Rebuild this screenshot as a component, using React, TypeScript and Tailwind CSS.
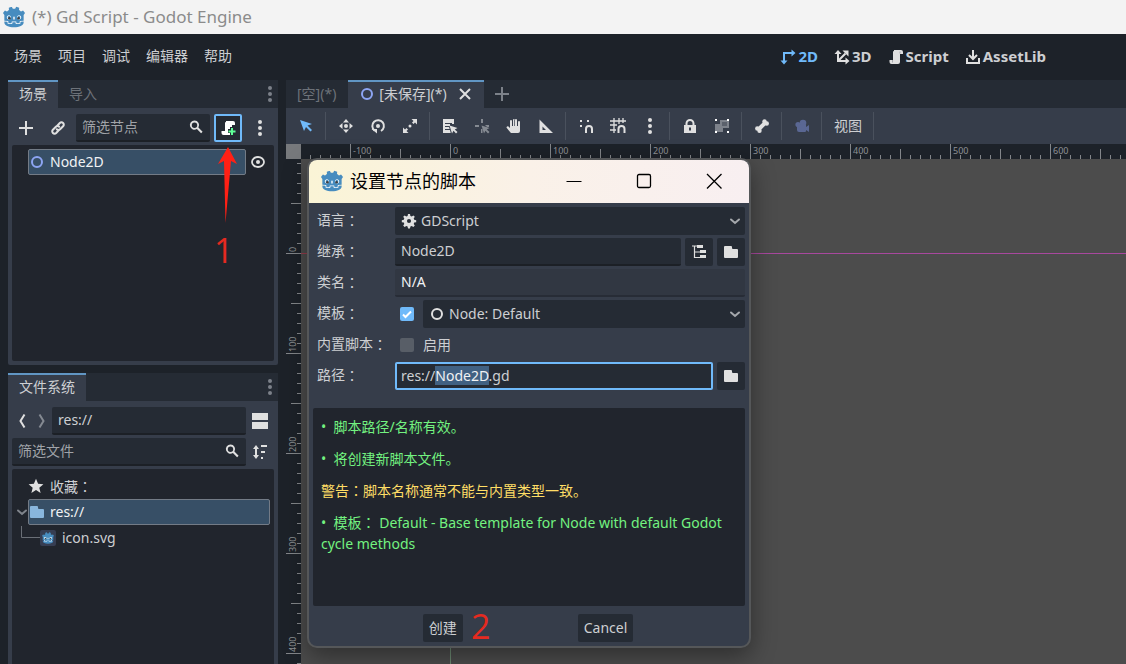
import { useEffect, useRef } from "react";
import type { ReactNode } from "react";
import { SiGodotengine } from "react-icons/si";

const Icon = ({ children, className = "size-4 text-[#e0e0e0]" }: { children: ReactNode; className?: string }) => (
  <svg viewBox="0 0 16 16" className={`shrink-0 ${className}`} fill="currentColor" aria-hidden="true">
    {children}
  </svg>
);

const GodotLogo = ({ className }: { className: string }) => (
  <svg viewBox="0 0 24 24" className={`shrink-0 ${className}`} aria-hidden="true">
    <path d="M4 9h16v11H4z" fill="#fff" />
    <SiGodotengine size={24} color="#478cbf" />
    <circle cx="7" cy="13.4" r="1.4" fill="#414042" />
    <circle cx="17" cy="13.4" r="1.4" fill="#414042" />
  </svg>
);

const Dots = ({ className }: { className?: string }) => (
  <Icon className={className}>
    <circle cx="8" cy="2" r="2" />
    <circle cx="8" cy="8" r="2" />
    <circle cx="8" cy="14" r="2" />
  </Icon>
);

const SearchIcon = () => (
  <Icon>
    <path d="M6.5 1.5a4.6 4.6 0 1 0 2.4 8.5l4.2 4.2 1.5-1.5-4.2-4.1A4.6 4.6 0 0 0 6.5 1.5zm0 2a2.7 2.7 0 1 1 0 5.400a2.7 2.7 0 0 1 0-5.400z" fillRule="evenodd" />
  </Icon>
);

const scriptPath =
  "M6 1v1a1 1 0 0 0-1 1v8H1.500v2a2 2 0 0 0 2 2H10a2 2 0 0 0 2-2V5h3V3a2 2 0 0 0-2-2z";

const ScriptIcon = () => (
  <Icon>
    <path d={scriptPath} />
    <path d="M4.500 11v2.500M12 2.500v2" stroke="#9a9da2" strokeWidth=".8" />
  </Icon>
);

const FolderIcon = ({ className }: { className?: string }) => (
  <Icon className={className}>
    <path d="M2 2a1 1 0 0 0-1 1v10a1 1 0 0 0 1 1h12a1 1 0 0 0 1-1V6a1 1 0 0 0-1-1h-4a1 1 0 0 1-1-1V3a1 1 0 0 0-1-1z" />
  </Icon>
);

const Chevron = ({ className }: { className: string }) => (
  <Icon className={className}>
    <path d="m4 6.500 4 3.500 4-3.500" fill="none" stroke="currentColor" strokeWidth="2" strokeLinecap="round" />
  </Icon>
);

const NodeRing = ({ className }: { className: string }) => (
  <Icon className={className}>
    <circle cx="8" cy="8" r="5" fill="none" stroke="currentColor" strokeWidth="2" />
  </Icon>
);

const Colon = () => <span className="font-['Noto_Sans_CJK_JP',sans-serif]">：</span>;

const IconButton = ({ label, children, className = "w-7" }: { label: string; children: ReactNode; className?: string }) => (
  <button type="button" aria-label={label} className={`flex h-7 shrink-0 items-center justify-center ${className}`}>
    {children}
  </button>
);

const Separator = () => (
  <div className="flex h-7 w-1 shrink-0 pl-px">
    <div className="w-px bg-[#4a515d]" />
  </div>
);

const fieldClass =
  "block h-7 w-full min-w-0 rounded-xs border-b-2 border-[#1c2026] bg-[#252b34] px-1.5 pb-0.5 text-sm text-[#cdcfd2] outline-none placeholder:text-[#a0a3a8]";

const MenuBar = () => (
  <header className="flex h-[46px] shrink-0 items-center pl-1.5 pr-[72px] text-sm">
    <nav className="flex pb-0.5">
      {["场景", "项目", "调试", "编辑器", "帮助"].map((name) => (
        <button key={name} type="button" className="px-2">
          {name}
        </button>
      ))}
    </nav>
    <div className="ml-auto flex text-[15px] font-bold text-[#cdcfd2]">
      <button type="button" className="flex items-center gap-0.5 px-2 text-[#70bafa]">
        <Icon className="size-4 text-[#70bafa]">
          <path d="M4 12V4h8" fill="none" stroke="currentColor" strokeWidth="2" />
          <path d="M11.500 0.500 15.500 4l-4 3.500zM0.500 11.500 4 15.500l3.500-4z" />
        </Icon>
        2D
      </button>
      <button type="button" className="flex items-center gap-0.5 px-2">
        <Icon>
          <path d="M4 3v9h9M4 12l7.500-7.500" fill="none" stroke="currentColor" strokeWidth="2" />
          <path d="M.5 5 4 1l3.500 4zM11.500 8.500l4 3.500-4 3.500zM8.500 1.500h6v6z" />
        </Icon>
        3D
      </button>
      <button type="button" className="flex items-center gap-0.5 px-2">
        <ScriptIcon />
        Script
      </button>
      <button type="button" className="flex items-center gap-0.5 px-2">
        <Icon>
          <path d="M2 9v5h12V9M8 1v8M4 6l4 4 4-4" fill="none" stroke="currentColor" strokeWidth="2" />
        </Icon>
        AssetLib
      </button>
    </div>
  </header>
);

const DockTabs = ({ tabs }: { tabs: string[] }) => (
  <div className="flex h-7 shrink-0 bg-[#252b34] text-sm">
    {tabs.map((tab, i) =>
      i === 0 ? (
        <button key={tab} type="button" className="border-t-2 border-[#6196c4] bg-[#363d4a] px-[11px] pb-0.5">
          {tab}
        </button>
      ) : (
        <button key={tab} type="button" className="px-[11px] text-[#6d7279]">
          {tab}
        </button>
      ),
    )}
    <button type="button" aria-label="停靠选项" className="ml-auto flex w-4 items-center justify-center">
      <Dots className="size-4 text-[#7c8189]" />
    </button>
  </div>
);

const SceneDock = () => (
  <section className="flex min-h-0 flex-[285_1_0%] flex-col rounded-xs bg-[#363d4a]">
    <DockTabs tabs={["场景", "导入"]} />
    <div className="flex min-h-0 flex-1 flex-col gap-[3px] px-1 pb-1 pt-1.5">
      <div className="flex gap-1">
        <IconButton label="添加节点">
          <Icon>
            <path d="M8 1v14M1 8h14" stroke="currentColor" strokeWidth="2" />
          </Icon>
        </IconButton>
        <IconButton label="实例化场景">
          <Icon>
            <g fill="none" stroke="currentColor" strokeWidth="2" strokeLinecap="round">
              <path d="m7.500 5.500 2.300-2.500a2.300 2.300 0 0 1 3.300 3.300l-3 3a2.300 2.300 0 0 1-3.300 0" />
              <path d="m8.500 10.500-2.300 2.500a2.300 2.300 0 0 1-3.300-3.300l3-3a2.300 2.300 0 0 1 3.300 0" />
            </g>
          </Icon>
        </IconButton>
        <div className="relative min-w-0 flex-1">
          <input aria-label="筛选节点" placeholder="筛选节点" className={fieldClass} />
          <div className="pointer-events-none absolute right-1.5 top-[5px]">
            <SearchIcon />
          </div>
        </div>
        <IconButton label="附加脚本" className="w-7 rounded-xs border-2 border-[#70bafa] bg-[#252b34]">
          <Icon className="size-4 text-white">
            <path d={scriptPath} />
            <path d="M12 7v8M8 11h8" stroke="#252b34" strokeWidth="4" />
            <path d="M12 8v7M8.500 11.500h7" stroke="#5fff97" strokeWidth="2" />
          </Icon>
        </IconButton>
        <IconButton label="更多选项">
          <Dots />
        </IconButton>
      </div>
      <div className="flex min-h-0 flex-1 flex-col rounded-xs bg-[#21252d] py-1 pl-4">
        <div className="flex items-center">
          <div className="flex h-[26px] flex-1 items-center gap-[5px] rounded-xs border border-[#737b86] bg-[#374f66] text-sm text-[#f0f2f4]">
            <NodeRing className="size-4 text-[#8da5f3]" />
            Node2D
          </div>
          <button type="button" aria-label="切换可见性" className="mx-1 flex">
            <Icon>
              <ellipse cx="8" cy="8" rx="6" ry="5" fill="none" stroke="currentColor" strokeWidth="1.8" />
              <circle cx="8" cy="8" r="2" />
            </Icon>
          </button>
          <div className="w-1" />
        </div>
      </div>
    </div>
  </section>
);

const FileSystemDock = () => (
  <section className="flex min-h-0 flex-[291_1_0%] flex-col rounded-t-xs bg-[#363d4a]">
    <DockTabs tabs={["文件系统"]} />
    <div className="flex min-h-0 flex-1 flex-col gap-[3px] px-1 pt-1.5">
      <div className="flex">
        <IconButton label="后退" className="w-5">
          <Icon>
            <path d="m10.500 1.500-4 6.500 4 6.500" fill="none" stroke="currentColor" strokeWidth="2" />
          </Icon>
        </IconButton>
        <IconButton label="前进" className="w-5">
          <Icon className="size-4 text-[#858a92]">
            <path d="m5.500 1.500 4 6.500-4 6.500" fill="none" stroke="currentColor" strokeWidth="2" />
          </Icon>
        </IconButton>
        <input aria-label="当前路径" defaultValue="res://" className={`flex-1 ${fieldClass}`} />
        <IconButton label="切换拆分模式">
          <Icon>
            <path d="M0 0h16v7H0zM0 9h16v7H0z" />
          </Icon>
        </IconButton>
      </div>
      <div className="flex">
        <div className="relative min-w-0 flex-1">
          <input aria-label="筛选文件" placeholder="筛选文件" className={fieldClass} />
          <div className="pointer-events-none absolute right-1.5 top-[5px]">
            <SearchIcon />
          </div>
        </div>
        <IconButton label="文件排序">
          <Icon>
            <path d="M4 3.500v9" stroke="currentColor" strokeWidth="2" />
            <path d="M1 5 4 1l3 4zM1 11l3 4 3-4zM9 1h6v2H9zM9 7h4v2H9zM9 13h2v2H9z" />
          </Icon>
        </IconButton>
      </div>
      <ul className="min-h-0 flex-1 rounded-t-xs bg-[#21252d] px-1 py-1 text-sm text-[#cdcfd2]">
        <li className="ml-3 flex h-[26px] items-center gap-1.5">
          <Icon>
            <path d="m8 .8 2.100 5 5.300.4-4.100 3.500 1.300 5.300L8 12.100l-4.600 2.900 1.300-5.300L.6 6.200l5.300-.4z" />
          </Icon>
          <span>
            收藏
            <Colon />
          </span>
        </li>
        <li className="flex items-center">
          <Chevron className="-mx-0.5 size-4 text-[#7f848c]" />
          <div className="flex h-[26px] flex-1 items-center gap-[5px] rounded-xs border border-[#737b86] bg-[#374f66] text-[#f0f2f4]">
            <FolderIcon className="size-4 text-[#88b6dd]" />
            res://
          </div>
        </li>
        <li className="flex h-[26px] items-center">
          <svg viewBox="0 0 20 26" className="ml-1 h-[26px] w-5 shrink-0" aria-hidden="true">
            <path d="M1.500 1v11.500H20" fill="none" stroke="#6a6f77" />
          </svg>
          <span className="mr-1.5 flex size-4 items-center justify-center rounded-xs bg-[#363d52]">
            <GodotLogo className="size-3" />
          </span>
          icon.svg
        </li>
      </ul>
    </div>
  </section>
);

const SceneTabs = () => (
  <div className="flex h-7 shrink-0 bg-[#252b34] text-sm">
    <button type="button" className="pl-[11px] pr-3 text-[#6d7279]">
      [空](*)
    </button>
    <div className="flex items-center border-t-2 border-[#6196c4] bg-[#363d4a] px-[11px] pb-0.5">
      <button type="button" className="flex items-center gap-1">
        <NodeRing className="size-4 text-[#8da5f3]" />
        [未保存](*)
      </button>
      <button type="button" aria-label="关闭标签" className="ml-2.5">
        <Icon>
          <path d="m3 3 10 10M13 3 3 13" stroke="currentColor" strokeWidth="2" />
        </Icon>
      </button>
    </div>
    <IconButton label="新建场景" className="ml-1 w-7">
      <Icon className="size-4 text-[#7c8189]">
        <path d="M8 1v14M1 8h14" stroke="currentColor" strokeWidth="2" />
      </Icon>
    </IconButton>
  </div>
);

const CanvasToolbar = () => (
  <div className="flex h-9 shrink-0 items-center gap-1 bg-[#363d4a] px-1.5 text-sm">
    <IconButton label="选择模式">
      <Icon className="size-4 text-[#70bafa]">
        <path d="m2 2 4 11 2-4 4.500 4.500 1.500-1.500L9.500 7.500 14 6z" />
      </Icon>
    </IconButton>
    <Separator />
    <IconButton label="移动模式">
      <Icon>
        <circle cx="8" cy="8" r="2" />
        <path d="m8 1 3 3.500H5zM8 15l3-3.500H5zM1 8l3.500-3v6zM15 8l-3.500-3v6z" />
      </Icon>
    </IconButton>
    <IconButton label="旋转模式">
      <Icon>
        <circle cx="8" cy="8" r="2" />
        <path d="M4.500 12.500A5.800 5.800 0 1 1 11 13" fill="none" stroke="currentColor" strokeWidth="2" />
        <path d="M1.500 11H7v4.500z" />
      </Icon>
    </IconButton>
    <IconButton label="缩放模式">
      <Icon>
        <path d="M9.500 1H15v5.500l-2-2-1.500 1.500-1.500-1.500L11.500 3zM1 9.500V15h5.500l-2-2L6 11.500 4.500 10 3 11.500z" />
        <circle cx="8" cy="8" r="1.500" />
      </Icon>
    </IconButton>
    <Separator />
    <IconButton label="列表选择">
      <Icon>
        <path d="M1 1h11v5l-2 0V5H3v1h5v2H3v1h4l.7 2H3v1h5l.7 3H1z" />
        <path d="m7.500 7.500 2.500 8 1.500-2.800 2.500 2.800 1.500-1.500-2.800-2.500L15.500 10z" />
      </Icon>
    </IconButton>
    <IconButton label="更改轴心">
      <Icon className="size-4 text-[#858a92]">
        <path d="M7 1h2v4H7zM1 7h4v2H1zM11 7h4v2h-2zM7 11h1.500v4H7z" />
        <path d="m7.500 7.500 2.500 8 1.500-2.800 2.500 2.800 1.500-1.500-2.800-2.500L15.500 10z" />
      </Icon>
    </IconButton>
    <IconButton label="平移模式">
      <Icon>
        <path d="M8 1a1 1 0 0 0-1 1v6H6V3a1 1 0 0 0-2 0v7L2.500 8.500a1.200 1.200 0 0 0-1.900 1.300L4.500 14.500A1.500 1.500 0 0 0 6 15h6a2 2 0 0 0 2-2V4a1 1 0 0 0-2 0v4h-1V2a1 1 0 0 0-2 0v6V2a1 1 0 0 0-1-1z" />
        <path d="M8.500 1.500V8M11.500 3v5M6.500 3v5" stroke="#363d4a" strokeWidth=".7" />
      </Icon>
    </IconButton>
    <IconButton label="标尺模式">
      <Icon>
        <path d="M1.500 1.500V15h13.500zM4.500 8.500l3.500 3.500H4.500z" fillRule="evenodd" />
      </Icon>
    </IconButton>
    <Separator />
    <IconButton label="智能吸附">
      <Icon>
        <path d="M2 2h2v2H2zM2 7h2v2H2zM9 2h2v2H9z" />
        <path d="M8 15v-4a3 3 0 0 1 6 0v4" fill="none" stroke="currentColor" strokeWidth="2" />
      </Icon>
    </IconButton>
    <IconButton label="栅格吸附">
      <Icon>
        <path d="M4 0v15M9 0v6M13 0v5M0 3h16M0 7h7M0 12h6" fill="none" stroke="currentColor" strokeWidth="1.300" />
        <path d="M8.500 15v-4a3 3 0 0 1 6 0v4" fill="none" stroke="currentColor" strokeWidth="2" />
      </Icon>
    </IconButton>
    <IconButton label="吸附选项">
      <Dots />
    </IconButton>
    <Separator />
    <IconButton label="锁定">
      <Icon>
        <path d="M8 1a4.500 4.500 0 0 0-4.500 4.500V7H2v8h12V7h-1.500V5.500A4.500 4.500 0 0 0 8 1zm0 2a2.500 2.500 0 0 1 2.500 2.500V7h-5V5.500A2.500 2.500 0 0 1 8 3zM7 9.500h2v3H7z" fillRule="evenodd" />
      </Icon>
    </IconButton>
    <IconButton label="编组">
      <Icon>
        <path d="M1 6h8v8H1z" fill="#7d828b" />
        <path d="M7 3h7v6H7z" fill="#5b616c" stroke="#7d828b" strokeWidth="2" />
        <path d="M1 1h2v2H1zM13 1h2v2h-2zM1 13h2v2H1zM13 13h2v2h-2z" fill="#fff" />
      </Icon>
    </IconButton>
    <Separator />
    <IconButton label="骨骼">
      <Icon>
        <path d="m4.500 11.500 7-7" stroke="currentColor" strokeWidth="4" />
        <circle cx="10.500" cy="3.500" r="2.200" />
        <circle cx="12.800" cy="5.500" r="2.200" />
        <circle cx="3.300" cy="10.500" r="2.200" />
        <circle cx="5.500" cy="12.800" r="2.200" />
      </Icon>
    </IconButton>
    <Separator />
    <IconButton label="相机覆盖">
      <Icon className="size-4 text-[#5a6793]">
        <circle cx="9" cy="5" r="3.300" />
        <circle cx="4" cy="6.500" r="2.600" />
        <path d="M3 7h9v2l3-2v7l-3-2v1a1 1 0 0 1-1 1H5a2 2 0 0 1-2-2z" />
      </Icon>
    </IconButton>
    <Separator />
    <button type="button" className="h-7 px-1.5 text-[#cdcfd2]">
      视图
    </button>
    <Separator />
  </div>
);

const range = (start: number, end: number, step: number) =>
  Array.from({ length: Math.max(0, Math.ceil((end - start) / step)) }, (_, i) => start + i * step);

const tickStart = (value: number) => (value % 100 === 0 ? 0 : value % 50 === 0 ? 5 : 11);

const ORIGIN_X = 149;
const ORIGIN_Y = 94;
const VIEW_LEFT = 301;
const VIEW_TOP = 159;

const HorizontalRuler = () => {
  const end = window.innerWidth - VIEW_LEFT - ORIGIN_X;
  return (
    <svg className="h-[15px] min-w-0 flex-1 bg-[#1d2229]" aria-hidden="true">
      {range(-140, end, 10).map((v) => (
        <path key={v} d={`M${ORIGIN_X + v + 0.5} ${tickStart(v)}V15`} stroke="#83868a" />
      ))}
      {range(-100, end - 20, 100).map((v) => (
        <text key={v} x={ORIGIN_X + v + 3} y="10" fontSize="9" fill="#8e9194">
          {v}
        </text>
      ))}
    </svg>
  );
};

const VerticalRuler = () => {
  const end = window.innerHeight - VIEW_TOP - ORIGIN_Y;
  return (
    <svg className="w-[15px] shrink-0 bg-[#1d2229]" aria-hidden="true">
      {range(-90, end, 10).map((v) => (
        <path key={v} d={`M${tickStart(v)} ${ORIGIN_Y + v + 0.5}H15`} stroke="#83868a" />
      ))}
      {range(0, end, 100).map((v) => (
        <text key={v} transform={`translate(10 ${ORIGIN_Y + v - 1}) rotate(-90)`} fontSize="9" fill="#8e9194">
          {v}
        </text>
      ))}
    </svg>
  );
};

const Canvas = () => (
  <div className="flex min-h-0 flex-1 flex-col">
    <div className="flex shrink-0">
      <div className="size-[15px] bg-[#77797c]" />
      <HorizontalRuler />
    </div>
    <div className="flex min-h-0 flex-1">
      <VerticalRuler />
      <svg className="h-full min-w-0 flex-1 bg-[#4c4c4c]" aria-hidden="true">
        <rect x={ORIGIN_X} y={ORIGIN_Y} width="1" height="100%" fill="#6c8a72" />
        <rect x="0" y={ORIGIN_Y} width={ORIGIN_X} height="1" fill="#963c4c" />
        <rect x={ORIGIN_X} y={ORIGIN_Y} width="100%" height="1" fill="#a8489e" />
      </svg>
    </div>
  </div>
);

const labelClass = "flex h-7 items-center pb-0.5 pl-1";
const sideButton = "w-7 rounded-xs bg-[#252b34]";

const ScriptDialog = () => {
  const pathRef = useRef<HTMLInputElement>(null);

  useEffect(() => {
    pathRef.current?.focus({ preventScroll: true });
    pathRef.current?.setSelectionRange(6, 12);
  }, []);

  return (
    <div
      role="dialog"
      aria-labelledby="dialog-title"
      className="absolute left-[307px] top-[158px] flex w-[444px] flex-col overflow-hidden rounded-[10px] border-2 border-[#555759] bg-[#363d4a] shadow-[0_8px_24px_rgba(0,0,0,0.4)]"
    >
      <div className="flex h-[43px] items-center bg-linear-to-r from-[#faf4d6] via-[#faf1e8] to-[#f8eff1] pb-0.5 pl-3 text-black">
        <GodotLogo className="size-[22px]" />
        <h1 id="dialog-title" className="ml-[7px] text-lg">
          设置节点的脚本
        </h1>
        <div className="ml-auto flex">
          <button type="button" aria-label="最小化" className="flex w-[70px] justify-center">
            <Icon className="size-4">
              <path d="M.5 8.500h15" stroke="currentColor" />
            </Icon>
          </button>
          <button type="button" aria-label="最大化" className="flex w-[70px] justify-center">
            <Icon className="size-4">
              <rect x="1.500" y="1.500" width="13" height="13" rx="1.500" fill="none" stroke="currentColor" strokeWidth="1.300" />
            </Icon>
          </button>
          <button type="button" aria-label="关闭" className="flex w-[70px] justify-center">
            <Icon className="size-4">
              <path d="m1 1 14.500 14.500M15.500 1 1 15.500" stroke="currentColor" strokeWidth="1.300" />
            </Icon>
          </button>
        </div>
      </div>

      <div className="flex flex-col px-1 pb-1 pt-1 text-sm text-[#cdcfd2]">
        <div className="grid grid-cols-[82px_1fr] gap-y-[3px]">
          <label htmlFor="language" className={labelClass}>
            语言
            <Colon />
          </label>
          <div className="relative">
            <select id="language" className="h-7 w-full appearance-none rounded-xs bg-[#252b34] pl-[26px] outline-none">
              <option>GDScript</option>
            </select>
            <div className="pointer-events-none absolute inset-0 flex items-center justify-between pl-1.5 pr-0.5">
              <Icon>
                <path d="M7 1h2l.4 2 1.300.5 1.700-1.100 1.400 1.400-1.100 1.700.5 1.300 2 .4v2l-2 .4-.5 1.300 1.100 1.700-1.400 1.400-1.700-1.100-1.300.5-.4 2H7l-.4-2-1.300-.5-1.700 1.100-1.400-1.400 1.100-1.700-.5-1.300-2-.4v-2l2-.4.5-1.300-1.100-1.700 1.400-1.400 1.700 1.100 1.300-.5zM8 6a2 2 0 1 0 0 4.100A2 2 0 0 0 8 6z" fillRule="evenodd" />
              </Icon>
              <Chevron className="size-4 text-[#a5a8ac]" />
            </div>
          </div>

          <label htmlFor="inherits" className={labelClass}>
            继承
            <Colon />
          </label>
          <div className="flex gap-1">
            <input id="inherits" defaultValue="Node2D" className={`flex-1 ${fieldClass}`} />
            <IconButton label="搜索父类" className={sideButton}>
              <Icon>
                <path d="M1 2h6M3.500 2v11.500H9M3.500 8H9" fill="none" stroke="currentColor" strokeWidth="1.200" />
                <path d="M6 1h6v3H6zM9 6h6v3H9zM9 11h6v3H9z" />
              </Icon>
            </IconButton>
            <IconButton label="选择父类文件" className={sideButton}>
              <FolderIcon />
            </IconButton>
          </div>

          <label htmlFor="class-name" className={labelClass}>
            类名
            <Colon />
          </label>
          <input
            id="class-name"
            readOnly
            value="N/A"
            className="h-7 w-full rounded-xs border-b-2 border-[#272c36] bg-[#313742] px-1.5 pb-0.5 text-[#f0f2f4] outline-none"
          />

          <label htmlFor="template" className={labelClass}>
            模板
            <Colon />
          </label>
          <div className="flex items-center">
            <div className="relative ml-[5px] mr-[9px] size-3.5 shrink-0">
              <input
                type="checkbox"
                aria-label="使用模板"
                defaultChecked
                className="block size-3.5 appearance-none rounded-xs bg-[#70bafa]"
              />
              <svg viewBox="0 0 14 14" className="pointer-events-none absolute inset-0 size-3.5" aria-hidden="true">
                <path d="m3 7.500 2.500 2.500L11 4.500" fill="none" stroke="#fff" strokeWidth="2" />
              </svg>
            </div>
            <div className="relative min-w-0 flex-1">
              <select id="template" className="h-7 w-full appearance-none rounded-xs bg-[#252b34] pl-[26px] outline-none">
                <option>Node: Default</option>
              </select>
              <div className="pointer-events-none absolute inset-0 flex items-center justify-between pl-1.5 pr-0.5">
                <NodeRing className="size-4 text-[#e0e0e0]" />
                <Chevron className="size-4 text-[#a5a8ac]" />
              </div>
            </div>
          </div>

          <span className={labelClass}>
            内置脚本
            <Colon />
          </span>
          <label className="flex h-7 items-center gap-[9px] pl-[5px]">
            <input type="checkbox" className="size-3.5 appearance-none rounded-xs bg-[#585e67]" />
            启用
          </label>

          <label htmlFor="path" className={labelClass}>
            路径
            <Colon />
          </label>
          <div className="flex gap-1">
            <input
              id="path"
              ref={pathRef}
              defaultValue="res://Node2D.gd"
              className="h-7 w-full min-w-0 flex-1 rounded-xs border-2 border-[#70bafa] bg-[#252b34] px-1 pb-0.5 outline-none selection:bg-[#416182] selection:text-[#f0f2f4]"
            />
            <IconButton label="选择脚本路径" className={sideButton}>
              <FolderIcon />
            </IconButton>
          </div>
        </div>

        <div className="mt-[18px] flex h-[198px] flex-col gap-[11px] rounded-xs bg-[#21252d] px-2 py-2 leading-[21px] text-[#73f280]">
          <p>•&nbsp; 脚本路径/名称有效。</p>
          <p>•&nbsp; 将创建新脚本文件。</p>
          <p className="text-[#ffde66]">
            警告
            <Colon />
            脚本名称通常不能与内置类型一致。
          </p>
          <p>
            •&nbsp; 模板
            <Colon /> Default - Base template for Node with default Godot cycle methods
          </p>
        </div>

        <div className="relative mt-2 flex justify-center gap-[115px] pr-[2px]">
          <button type="button" className="h-7 rounded-xs bg-[#252b34] px-1.5">
            创建
          </button>
          <span className="absolute left-[158px] top-[-5px] font-['Open_Sans',sans-serif] text-[34px] leading-[34px] text-[#e52a20]">
            2
          </span>
          <button type="button" className="h-7 rounded-xs bg-[#252b34] px-1.5">
            Cancel
          </button>
        </div>
      </div>
    </div>
  );
};

export default function App() {
  return (
    <div className="relative flex h-screen flex-col overflow-hidden bg-[#1d2229] font-['Noto_Sans','Noto_Sans_CJK_SC',sans-serif] text-[#cdcfd2]">
      <div className="flex h-[34px] shrink-0 items-center gap-[7px] bg-[#f3f3f3] pl-[3px] text-[17px] text-[#8b8b8b]">
        <GodotLogo className="size-[22px]" />
        (*) Gd Script - Godot Engine
      </div>
      <MenuBar />
      <main className="flex min-h-0 flex-1 gap-2 pl-2">
        <div className="flex w-[270px] shrink-0 flex-col gap-2">
          <SceneDock />
          <FileSystemDock />
        </div>
        <div className="flex min-w-0 flex-1 flex-col">
          <SceneTabs />
          <CanvasToolbar />
          <Canvas />
        </div>
      </main>
      <svg viewBox="0 0 20 76" className="absolute left-[218px] top-[147px] h-[76px] w-5" aria-hidden="true">
        <path d="M10 0l9 17-6-3L7.500 76 6 14l-6 3z" fill="#ff2015" />
      </svg>
      <span className="absolute left-[214px] top-[229px] font-['Open_Sans',sans-serif] text-[34px] leading-[42px] text-[#e52a20]">
        1
      </span>
      <ScriptDialog />
    </div>
  );
}
